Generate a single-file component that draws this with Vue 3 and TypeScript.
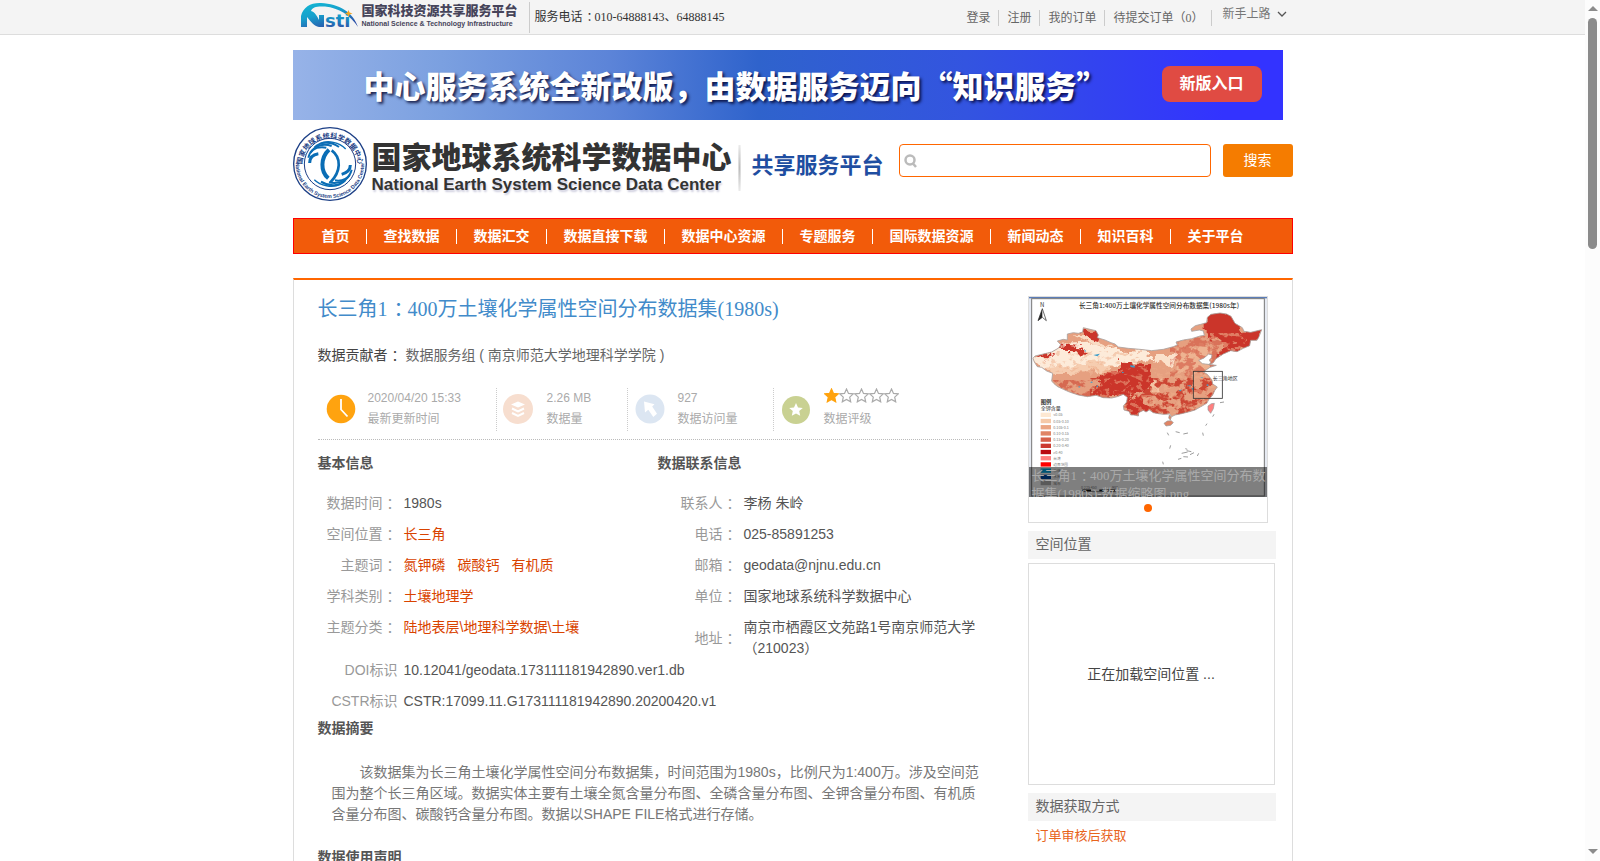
<script setup lang="ts">
import { ref } from 'vue'

interface NavItem { label: string }
interface InfoRow { label: string; values: string[]; link?: boolean }
interface LegendRow { color: string; text: string }

const keyword = ref('')

const userLinks: string[] = ['登录', '注册', '我的订单', '待提交订单（0）']

const navItems: NavItem[] = [
  '首页', '查找数据', '数据汇交', '数据直接下载', '数据中心资源',
  '专题服务', '国际数据资源', '新闻动态', '知识百科', '关于平台',
].map((label) => ({ label }))

const basicRows: InfoRow[] = [
  { label: '数据时间', values: ['1980s'] },
  { label: '空间位置', values: ['长三角'], link: true },
  { label: '主题词', values: ['氮钾磷', '碳酸钙', '有机质'], link: true },
  { label: '学科类别', values: ['土壤地理学'], link: true },
  { label: '主题分类', values: ['陆地表层\\地理科学数据\\土壤'], link: true },
]

const contactRows: InfoRow[] = [
  { label: '联系人', values: ['李杨 朱岭'] },
  { label: '电话', values: ['025-85891253'] },
  { label: '邮箱', values: ['geodata@njnu.edu.cn'] },
  { label: '单位', values: ['国家地球系统科学数据中心'] },
  { label: '地址', values: ['南京市栖霞区文苑路1号南京师范大学（210023）'] },
]

const idRows: InfoRow[] = [
  { label: 'DOI标识', values: ['10.12041/geodata.173111181942890.ver1.db'] },
  { label: 'CSTR标识', values: ['CSTR:17099.11.G173111181942890.20200420.v1'] },
]

const legend: LegendRow[] = [
  { color: '#fde8d2', text: '<0.05' },
  { color: '#f5c9a8', text: '0.05-0.10' },
  { color: '#eba684', text: '0.105-0.1' },
  { color: '#e08465', text: '0.10-0.15' },
  { color: '#d65f49', text: '0.15-0.20' },
  { color: '#cc3a30', text: '0.20-0.40' },
  { color: '#b90a12', text: '>0.40' },
  { color: '#ff7f7f', text: '台湾' },
  { color: '#ff0000', text: '边界范围' },
  { color: '#00a9e6', text: '水体' },
  { color: '#004da8', text: '水库' },
  { color: '#b2b2b2', text: '城市' },
]

const starPath = 'M7.5 1 L9.5 5.4 L14.3 5.9 L10.7 9.1 L11.7 13.8 L7.5 11.4 L3.3 13.8 L4.3 9.1 L0.7 5.9 L5.5 5.4 Z'

const chinaPath =
  'M69 235 L75 228 L100 222 L125 216 L146 204 L152 194 L142 183 L160 178 L172 180 L172 162 L190 158 L205 160 L218 156 L220 143 L240 148 L258 152 L265 165 L262 173 L285 180 L303 188 L315 192 L325 201 L355 205 L390 208 L425 212 L460 208 L490 200 L502 195 L498 186 L520 180 L545 176 L570 168 L583 166 L580 153 L568 150 L545 154 L543 147 L556 137 L572 133 L590 128 L592 112 L603 103 L630 99 L650 102 L663 109 L675 130 L697 143 L702 154 L722 157 L755 149 L747 170 L741 181 L722 181 L719 197 L700 205 L681 215 L662 212 L640 222 L618 236 L610 248 L597 255 L602 247 L598 240 L604 234 L606 225 L596 222 L582 234 L566 241 L577 251 L586 252 L619 256 L600 262 L588 270 L580 276 L592 283 L606 300 L608 312 L622 321 L614 332 L608 345 L597 358 L590 370 L571 381 L555 390 L535 396 L515 401 L495 405 L485 410 L479 402 L460 403 L445 401 L430 398 L418 390 L408 396 L400 391 L386 398 L385 408 L372 405 L362 405 L357 394 L342 390 L340 378 L350 366 L352 352 L340 343 L322 350 L305 354 L280 353 L258 346 L232 350 L205 345 L178 336 L160 328 L143 320 L132 311 L125 303 L128 280 L110 273 L95 262 L82 260 L73 246 Z'
</script>

<template>
  <div class="shell">
    <div class="page">
      <div class="topbar">
        <div class="wrap topbar-inner">
          <a class="nsti" href="#" aria-label="Nsti">
            <svg class="nsti-mark" viewBox="0 0 60 28" aria-hidden="true">
              <defs>
                <linearGradient id="nstiFill" x1="0" y1="0" x2="0" y2="1">
                  <stop offset="0" stop-color="#12b3d6" />
                  <stop offset="0.5" stop-color="#1a86c0" />
                  <stop offset="1" stop-color="#3b3f9e" />
                </linearGradient>
                <linearGradient id="nstiArc" x1="0" y1="0" x2="0.6" y2="1">
                  <stop offset="0" stop-color="#12b8d4" />
                  <stop offset="0.5" stop-color="#17a0cc" />
                  <stop offset="1" stop-color="#2d4fa8" />
                </linearGradient>
              </defs>
              <path d="M0 25 V14 C2 5 10 0.500 20 1 C38 2 52 10 57 25 C49 13 38 6 24 4.500 C16 4 11 5 10 9 C14 10 16 14 18 18 V13 H23 V25 H18 C13 24 10 20 6 15 V25 Z" fill="url(#nstiArc)" />
              <text x="24" y="25" fill="url(#nstiFill)">sti</text>
              <path d="M47.500 8 L48.600 10.600 L51.500 11.500 L48.600 12.500 L47.500 15 L46.400 12.500 L44 11.500 L46.400 10.600 Z" fill="#f5a623" />
            </svg>
            <span class="nsti-words">
              <span class="nsti-cn">国家科技资源共享服务平台</span>
              <span class="nsti-en">National Science &amp; Technology Infrastructure</span>
            </span>
          </a>
          <span class="hotline">服务电话<span class="colon">：</span>010-64888143、64888145</span>
          <ul class="user-links">
            <li v-for="link in userLinks" :key="link"><a href="#">{{ link }}</a></li>
          </ul>
          <button class="guide" type="button">
            新手上路
            <svg viewBox="0 0 10 6" aria-hidden="true"><path d="M1 1 L5 5 L9 1" fill="none" stroke="#555" stroke-width="1.300" /></svg>
          </button>
        </div>
      </div>

      <div class="wrap">
        <div class="banner">
          <span class="banner-text">中心服务系统全新改版，由数据服务迈向“知识服务”</span>
          <a class="banner-btn" href="#">新版入口</a>
        </div>

        <header class="brand">
          <svg class="seal" viewBox="0 0 222 222" aria-hidden="true">
            <defs>
              <path id="sealTop" d="M27 118 A84 84 0 1 1 195 118" />
              <path id="sealBottom" d="M9 96 A103 103 0 1 0 213 96" />
            </defs>
            <circle cx="111" cy="111" r="109" fill="#fff" stroke="#1c3f86" stroke-width="4" />
            <circle cx="111" cy="111" r="77" fill="none" stroke="#1c3f86" stroke-width="3" />
            <text class="seal-cn"><textPath href="#sealTop" startOffset="50%" text-anchor="middle">国家地球系统科学数据中心</textPath></text>
            <text class="seal-en"><textPath href="#sealBottom" startOffset="50%" text-anchor="middle">National Earth System Science Data Center</textPath></text>
            <g fill="none" stroke="#0a6db5">
              <path d="M50 108 C50 90 62 82 76 80" stroke-width="9" />
              <path d="M46 92 C52 66 74 58 100 62" stroke-width="6" />
              <path d="M52 77 C64 58 88 48 116 57" stroke-width="6" />
              <path d="M64 62 C82 44 112 42 138 60" stroke-width="6" />
              <path d="M80 50 C104 38 140 46 158 66" stroke-width="4" />
              <path d="M108 68 C82 92 82 134 106 154" stroke-width="12" />
              <path d="M116 70 C146 92 144 134 112 166" stroke-width="8" />
              <path d="M172 114 C172 132 160 138 146 142" stroke-width="9" />
              <path d="M176 128 C170 154 148 164 126 160" stroke-width="6" />
              <path d="M170 144 C158 164 134 172 108 166" stroke-width="6" />
              <path d="M158 159 C140 178 110 180 84 164" stroke-width="6" />
              <path d="M142 172 C118 184 82 176 64 158" stroke-width="4" />
            </g>
          </svg>
          <h1 class="brand-names">
            <span class="brand-cn">国家地球系统科学数据中心</span>
            <span class="brand-en">National Earth System Science Data Center</span>
          </h1>
          <span class="brand-rule"></span>
          <span class="brand-sub">共享服务平台</span>
          <form class="search" @submit.prevent>
            <label class="search-box">
              <svg viewBox="0 0 14 14" aria-hidden="true">
                <circle cx="6" cy="6" r="4.500" fill="none" stroke="#bbb" stroke-width="2.500" />
                <path d="M8.500 9 L12 13" stroke="#bbb" stroke-width="2.500" />
              </svg>
              <input v-model="keyword" type="text" aria-label="搜索" />
            </label>
            <button type="submit">搜索</button>
          </form>
        </header>

        <nav class="nav">
          <a v-for="item in navItems" :key="item.label" href="#">{{ item.label }}</a>
        </nav>

        <div class="card">
          <main class="detail">
            <h2 class="title">长三角1<span class="colon">：</span>400万土壤化学属性空间分布数据集(1980s)</h2>
            <p class="contributor"><b>数据贡献者<span class="colon">：</span></b> 数据服务组 ( 南京师范大学地理科学学院 )</p>

            <ul class="stats">
              <li class="stat stat-time">
                <svg viewBox="0 0 30 30" aria-hidden="true">
                  <circle cx="15" cy="15" r="14.300" fill="#ffa30f" />
                  <path d="M15 5 V15.500 L21.500 22.500" fill="none" stroke="#fff" stroke-width="1.800" />
                </svg>
                <div><span>2020/04/20 15:33</span><span>最新更新时间</span></div>
              </li>
              <li class="stat stat-size">
                <svg viewBox="0 0 30 30" aria-hidden="true">
                  <circle cx="15" cy="15" r="15" fill="#f7decf" />
                  <path d="M15 7.500 L22 10.500 L15 13.500 L8 10.500 Z" fill="#fff" />
                  <path d="M9 14.500 L15 17.300 L21 14.500 M9 19 L15 21.800 L21 19" fill="none" stroke="#fff" stroke-width="2" />
                </svg>
                <div><span>2.26 MB</span><span>数据量</span></div>
              </li>
              <li class="stat stat-visits">
                <svg viewBox="0 0 30 30" aria-hidden="true">
                  <circle cx="15" cy="15" r="14.500" fill="#dce6f2" />
                  <path d="M9 7.500 L19.500 10.300 L17.200 12.600 L22 19.800 L18.300 23 L13.300 15.800 L10 18.500 Z" fill="#fff" />
                </svg>
                <div><span>927</span><span>数据访问量</span></div>
              </li>
              <li class="stat stat-rating">
                <svg viewBox="0 0 30 30" aria-hidden="true">
                  <circle cx="15" cy="16" r="14" fill="#c9d192" />
                  <path transform="translate(7.500 8)" :d="starPath" fill="#fff" />
                </svg>
                <div>
                  <span class="stars">
                    <svg v-for="n in 5" :key="n" viewBox="0 0 15 15" aria-hidden="true">
                      <path :d="starPath" :fill="n === 1 ? '#ffa30f' : '#fff'" :stroke="n === 1 ? '#ffa30f' : '#aaa'" stroke-width="1.200" />
                    </svg>
                  </span>
                  <span>数据评级</span>
                </div>
              </li>
            </ul>

            <div class="info">
              <section>
                <h3>基本信息</h3>
                <table>
                  <tbody>
                    <tr v-for="row in basicRows" :key="row.label">
                      <th scope="row">{{ row.label }}<span class="colon">：</span></th>
                      <td>
                        <template v-if="row.link"><a v-for="v in row.values" :key="v" href="#">{{ v }}</a></template>
                        <template v-else>{{ row.values[0] }}</template>
                      </td>
                    </tr>
                  </tbody>
                </table>
              </section>
              <section>
                <h3>数据联系信息</h3>
                <table>
                  <tbody>
                    <tr v-for="row in contactRows" :key="row.label">
                      <th scope="row">{{ row.label }}<span class="colon">：</span></th>
                      <td>{{ row.values[0] }}</td>
                    </tr>
                  </tbody>
                </table>
              </section>
            </div>
            <table class="ids">
              <tbody>
                <tr v-for="row in idRows" :key="row.label">
                  <th scope="row">{{ row.label }}</th>
                  <td>{{ row.values[0] }}</td>
                </tr>
              </tbody>
            </table>

            <h3>数据摘要</h3>
            <p class="abstract">该数据集为长三角土壤化学属性空间分布数据集，时间范围为1980s，比例尺为1:400万。涉及空间范围为整个长三角区域。数据实体主要有土壤全氮含量分布图、全磷含量分布图、全钾含量分布图、有机质含量分布图、碳酸钙含量分布图。数据以SHAPE FILE格式进行存储。</p>
            <h3>数据使用声明</h3>
          </main>

          <aside class="side">
            <figure class="slider">
              <div class="slide">
                <svg class="map" viewBox="57 51 714 600" preserveAspectRatio="none" aria-hidden="true">
                  <defs>
                    <clipPath id="land"><path :d="chinaPath" /></clipPath>
                    <filter id="soften" x="-20%" y="-20%" width="140%" height="140%">
                      <feTurbulence type="fractalNoise" baseFrequency="0.030" numOctaves="4" seed="6" result="n" />
                      <feDisplacementMap in="SourceGraphic" in2="n" scale="50" xChannelSelector="R" yChannelSelector="G" />
                    </filter>
                    <filter id="dark" x="0" y="0" width="100%" height="100%" color-interpolation-filters="sRGB">
                      <feTurbulence type="fractalNoise" baseFrequency="0.040 0.050" numOctaves="5" seed="11" />
                      <feColorMatrix values="0 0 0 0 0.800  0 0 0 0 0.270  0 0 0 0 0.200  7 0 0 0 -3.100" />
                    </filter>
                    <filter id="light" x="0" y="0" width="100%" height="100%" color-interpolation-filters="sRGB">
                      <feTurbulence type="fractalNoise" baseFrequency="0.050 0.070" numOctaves="4" seed="23" />
                      <feColorMatrix values="0 0 0 0 0.930  0 0 0 0 0.680  0 0 0 0 0.540  0 8 0 0 -4.300" />
                    </filter>
                  </defs>
                  <rect x="57" y="51" width="714" height="600" fill="#e6eaf2" />
                  <rect x="57" y="51" width="714" height="4" fill="#5b7db8" />
                  <rect x="65" y="56" width="698" height="592" fill="#fff" stroke="#777" stroke-width="3" />
                  <g clip-path="url(#land)">
                    <rect x="57" y="80" width="714" height="340" fill="#e6a080" />
                    <g filter="url(#soften)">
                      <path d="M60 240 L150 195 L260 190 L330 212 L400 215 L430 240 L330 245 L250 262 L90 270 Z" fill="#fdebd9" />
                      <path d="M100 265 L300 245 L300 275 L130 280 Z" fill="#f6cdb0" />
                      <path d="M440 225 L500 225 L490 255 L430 250 Z" fill="#fbe1cb" />
                      <path d="M400 300 L450 300 L445 340 L410 340 Z" fill="#f3c4a5" />
                      <path d="M500 200 L600 200 L600 290 L500 280 Z" fill="#eeb391" />
                      <path d="M180 170 L260 165 L310 200 L230 185 Z" fill="#f9dcc4" />
                    </g>
                    <rect x="240" y="295" width="400" height="125" filter="url(#dark)" />
                    <rect x="130" y="300" width="110" height="60" filter="url(#dark)" opacity="0.600" />
                    <rect x="480" y="170" width="180" height="125" filter="url(#dark)" opacity="0.500" />
                    <rect x="90" y="215" width="300" height="60" filter="url(#light)" opacity="0.500" />
                    <g filter="url(#soften)" fill="#cb342a">
                      <path d="M330 240 L410 255 L430 290 L420 330 L350 350 L260 345 L270 285 L330 280 Z" />
                      <path d="M350 350 L400 360 L410 400 L350 410 Z" />
                      <path d="M150 195 L235 205 L240 215 L150 212 Z" />
                      <path d="M215 140 L275 160 L270 180 L215 165 Z" />
                      <path d="M80 225 L130 220 L110 235 Z" />
                      <path d="M590 90 L690 110 L700 150 L770 140 L740 190 L690 210 L630 235 L640 180 L590 170 Z" />
                    </g>
                    <rect x="260" y="260" width="370" height="160" filter="url(#light)" opacity="0.500" />
                    <rect x="600" y="160" width="110" height="60" filter="url(#light)" opacity="0.600" />
                    <g fill="#3b9dcc">
                      <path d="M360 256 l14 1 v6 l-12 -2z M220 208 l8 4 v4z M250 225 l20 -4 -8 8z M335 275 l8 2 -6 3z M170 180 l9 5z M240 308 l6 -4 2 4z M206 318 l6 3 -6 2z M545 325 l5 -2 v10z M506 332 l10 -4 -4 6z M590 312 l7 3 -6 4z M570 292 h8 v3z M530 318 l12 -3v4z M258 320 l6 -4v5z" />
                    </g>
                  </g>
                  <path :d="chinaPath" fill="none" stroke="#a9a2a0" stroke-width="2.500" />
                  <path d="M462 430 L472 423 L484 422 L490 428 L482 436 L468 438 Z M478 405 L484 411 L481 420 L476 414 Z" fill="#e08465" stroke="#999" stroke-width="2" />
                  <path d="M594 378 L604 371 L613 370 L610 386 L602 400 L594 390 Z" fill="#ff7f7f" stroke="#999" stroke-width="2" />
                  <rect x="550" y="274" width="87" height="81" fill="none" stroke="#333" stroke-width="2.500" />
                  <path d="M472 458 l4 8 M497 455 l12 3 M520 462 l14 -3 M578 458 l2 9 M587 437 l4 -6 M608 410 l4 -7 M630 368 l12 -2 M482 496 l-3 10 M458 545 l2 8 M562 528 l4 -8 M500 580 h5 M515 520 l18 -4 M530 512 l14 3 M540 524 l12 -6 M520 530 l14 1 M504 538 l10 -3 M526 506 l6 2" stroke="#888" stroke-width="2.500" fill="none" />
                  <text class="map-title" x="447" y="83" text-anchor="middle">长三角1:400万土壤化学属性空间分布数据集(1980s年)</text>
                  <text class="map-n" x="90" y="81">N</text>
                  <path d="M97 86 L109 122 L97 112 L84 122 Z" fill="#fff" stroke="#222" stroke-width="2" />
                  <path d="M97 86 L97 112 L84 122 Z" fill="#222" />
                  <text class="map-small" x="608" y="299">长三角地区</text>
                  <text class="map-legend" x="92" y="373">图例</text>
                  <text class="map-small" x="92" y="391">全钾含量</text>
                  <g v-for="(row, i) in legend" :key="row.color">
                    <rect x="92" :y="398 + i * 18.600" width="31" height="13" :fill="row.color" />
                    <text class="map-tiny" x="130" :y="409 + i * 18.600">{{ row.text }}</text>
                  </g>
                  <path d="M217 631 h26 M268 631 h48" stroke="#111" stroke-width="5" />
                  <path d="M217 635 h100" stroke="#111" stroke-width="1.500" />
                  <text class="map-tiny" x="213" y="626">0 225 450</text>
                  <text class="map-tiny" x="306" y="626">900</text>
                </svg>
                <figcaption>长三角1<span class="colon">：</span>400万土壤化学属性空间分布数据集(1980s)-数据缩略图.png</figcaption>
              </div>
              <button class="dot" type="button" aria-label="1"></button>
            </figure>
            <h4>空间位置</h4>
            <div class="loading">正在加载空间位置 ...</div>
            <h4>数据获取方式</h4>
            <p class="access">订单审核后获取</p>
          </aside>
        </div>
      </div>
    </div>

    <div class="scrollbar" aria-hidden="true">
      <svg viewBox="0 0 10 5"><path d="M0 5 L5 0 L10 5 Z" fill="#8b8b8b" /></svg>
      <div class="track"><div class="thumb"></div></div>
      <svg viewBox="0 0 10 5"><path d="M0 0 L5 5 L10 0 Z" fill="#8b8b8b" /></svg>
    </div>
  </div>
</template>

<style>
body {
  background: #fff;
}
</style>

<style scoped>
.shell {
  display: flex;
  height: 100vh;
  overflow: hidden;
  font: 14px/21px "Liberation Sans", "Noto Sans CJK SC", sans-serif;
  color: #555;
}
.shell * { box-sizing: border-box; }
.page { flex: 1; min-width: 0; overflow: hidden; }
.wrap { width: 1000px; max-width: 100%; margin: 0 auto; }
h1, h2, h3, h4, p, ul, figure { margin: 0; padding: 0; }
ul { list-style: none; }
a { color: inherit; text-decoration: none; }
button { border: 0; padding: 0; background: none; font: inherit; color: inherit; cursor: pointer; }
/* centres the full-width colon in its cell */
.colon { padding-left: 4px; margin-right: -4px; }

.topbar {
  height: 35px;
  background: #f4f4f4;
  border-bottom: 1px solid #ddd;
}
.topbar-inner {
  display: flex;
  height: 34px;
  font: 12px/16px "Liberation Serif", "Noto Sans CJK SC", serif;
  color: #666;
}
.nsti {
  display: flex;
  gap: 1px;
  height: 31px;
  margin: 2px 0 0 8px;
  padding-right: 7px;
  border-right: 1px solid #ccc;
  color: #46445a;
  font-family: "Liberation Sans", "Noto Sans CJK SC", sans-serif;
}
.nsti-mark { width: 60px; height: 28px; font: bold 18px "DejaVu Sans", sans-serif; }
.nsti-words { display: flex; flex-direction: column; width: 160px; white-space: nowrap; }
.nsti-cn { font-size: 13px; line-height: 18px; font-weight: 900; }
.nsti-en { font-size: 7px; line-height: 8px; font-weight: bold; }
.hotline { margin: 9px 0 0 5px; color: #333; }
.user-links { display: flex; margin: 10px 0 0 auto; }
.user-links li { height: 16px; padding: 0 8px; border-right: 1px solid #ccc; }
.guide {
  display: flex;
  align-items: center;
  gap: 6px;
  height: 16px;
  margin: 6px 6px 0 10px;
  color: #777;
}
.guide svg { width: 10px; height: 6px; }

.banner {
  display: flex;
  align-items: center;
  justify-content: space-between;
  width: 990px;
  max-width: 100%;
  height: 70px;
  margin-top: 15px;
  padding: 0 21px 0 71px;
  background: linear-gradient(90deg, #97b3e8 0, #7ba0e0 15%, #5c84d8 32%, #2f63cc 47%, #3354e0 68%, #3333ff 94%);
}
.banner-text {
  font-family: "Noto Sans CJK SC", sans-serif;
  font-size: 31px;
  font-weight: 900;
  line-height: 40px;
  color: #fff;
  text-shadow: 2px 2px 3px rgba(0, 0, 40, 0.8);
  white-space: nowrap;
}
.banner-btn {
  width: 100px;
  height: 36px;
  margin-bottom: 2px;
  border-radius: 8px;
  background: #e04b43;
  color: #fff;
  font-size: 16px;
  font-weight: bold;
  line-height: 36px;
  text-align: center;
}

.brand { display: flex; height: 98px; padding-top: 7px; }
.seal { width: 74px; height: 74px; flex: none; }
.seal-cn { font: bold 21px "Noto Sans CJK SC", sans-serif; fill: #1c3f86; }
.seal-en { font: bold 16px "Liberation Sans", sans-serif; fill: #1c3f86; }
.brand-names { width: 366px; margin: 8px 0 0 5px; color: #333; white-space: nowrap; }
.brand-cn { display: block; font: 900 30px/40px "Noto Sans CJK SC", sans-serif; }
.brand-en { display: block; font-size: 17px; line-height: 20px; text-shadow: 1px 2px 2px #ccd; }
.brand-rule {
  width: 3px;
  height: 46px;
  margin: 18px 11px 0 0;
  background: radial-gradient(ellipse at center, #bbb, #fff);
}
.brand-sub { margin-top: 23px; font-size: 22px; font-weight: bold; line-height: 32px; color: #1f4ea1; white-space: nowrap; }
.search { display: flex; gap: 12px; margin: 17px 0 0 auto; }
.search-box {
  display: flex;
  align-items: center;
  width: 312px;
  height: 33px;
  padding: 0 4px;
  border: 1px solid #f60;
  border-radius: 4px;
}
.search-box svg { width: 14px; height: 14px; }
.search-box input { flex: 1; min-width: 0; border: 0; outline: 0; background: none; font: inherit; }
.search button { width: 70px; height: 33px; border-radius: 3px; background: #f57c00; color: #fff; }

.nav {
  display: flex;
  align-items: center;
  height: 36px;
  padding-left: 11px;
  border: 1px solid red;
  background: #f25b0a;
  color: #fff;
  font-weight: bold;
}
.nav a { height: 15px; padding: 0 16px 0 17px; border-right: 1px solid #fff; line-height: 15px; }
.nav a:last-child { border-right: 0; }

.card {
  display: flex;
  justify-content: space-between;
  margin-top: 24px;
  padding: 0 16px 0 24px;
  border: 1px solid #ddd;
  border-top: 2px solid #f60;
}
.detail { width: 670px; padding-top: 15px; }
.title { font: 20px/28px "Liberation Serif", "Noto Sans CJK SC", serif; color: #428bca; }
.title .colon { padding-left: 6px; margin-right: -6px; }
.contributor { margin-top: 22px; color: #666; }
.contributor b { font-weight: normal; color: #444; }

.stats {
  display: flex;
  height: 74px;
  padding-top: 22px;
  border-bottom: 1px dotted #bbb;
  font-size: 12px;
  color: #aaa;
}
.stat { display: flex; height: 43px; border-right: 1px dotted #ccc; }
.stat > svg { width: 30px; height: 30px; margin-top: 6px; }
.stat > div { display: flex; flex-direction: column; }
.stat-time { width: 179px; padding-left: 8px; gap: 12px; }
.stat-size { width: 131px; padding-left: 6px; gap: 14px; }
.stat-visits { width: 146px; padding-left: 7px; gap: 13px; }
.stat-rating { padding-left: 7px; gap: 13px; border-right: 0; }
.stars { display: flex; height: 21px; }
.stars svg { width: 15px; height: 15px; }

h3 { font-size: 14px; font-weight: bold; color: #555; }
.info { display: flex; height: 215px; padding-top: 13px; }
.info section { width: 340px; }
.info section:last-child { width: 330px; }
.info table { margin-top: 14px; }
table { border-collapse: collapse; }
th, td { padding: 5px 0; text-align: left; }
th { width: 80px; padding-right: 1px; font-weight: normal; color: #999; text-align: right; white-space: nowrap; }
td { padding-left: 6px; }
td a { margin-right: 12px; color: #d94300; }
.ids { margin-bottom: 1px; }
.ids tr th { padding-right: 0; }
.abstract { padding: 23px 0 22px 14px; color: #777; text-indent: 28px; }

.side { width: 248px; padding-top: 16px; }
.slider { width: 240px; height: 227px; border: 1px solid #ddd; text-align: center; }
.slide { position: relative; height: 200px; overflow: hidden; }
.map { display: block; width: 100%; height: 200px; }
.map text { font-family: "Noto Sans CJK SC", sans-serif; fill: #333; }
.map .map-title { font-size: 20px; font-weight: 500; }
.map .map-n { font-size: 18px; }
.map .map-legend { font-size: 16px; font-weight: bold; }
.map .map-small { font-size: 15px; }
.map .map-tiny { font-size: 11px; fill: #777; }
figcaption {
  position: absolute;
  right: 0;
  bottom: 0;
  left: 0;
  height: 30px;
  padding-left: 3px;
  overflow: hidden;
  background: rgba(0, 0, 0, 0.5);
  color: #aaa;
  font: 13px/18px "Liberation Serif", "Noto Sans CJK SC", serif;
  text-align: left;
}
.dot { display: block; width: 8px; height: 8px; margin: 7px auto 0; border-radius: 50%; background: #f60; }
h4 {
  height: 28px;
  margin-top: 8px;
  padding-left: 8px;
  background: #f4f4f4;
  font-size: 14px;
  font-weight: normal;
  line-height: 27px;
  color: #666;
}
.loading {
  display: flex;
  align-items: center;
  justify-content: center;
  width: 247px;
  height: 222px;
  margin-top: 4px;
  border: 1px solid #ddd;
  color: #444;
}
.access { padding: 4px 8px; font-size: 13px; color: #e8641b; }

.scrollbar {
  display: flex;
  flex-direction: column;
  align-items: center;
  width: 15px;
  padding: 6px 0 7px;
  background: #fcfcfc;
}
.scrollbar svg { width: 10px; height: 5px; flex: none; }
.track { flex: 1; padding: 7px 0; }
.thumb { width: 9px; height: 28%; border-radius: 5px; background: #8b8b8b; }
</style>
